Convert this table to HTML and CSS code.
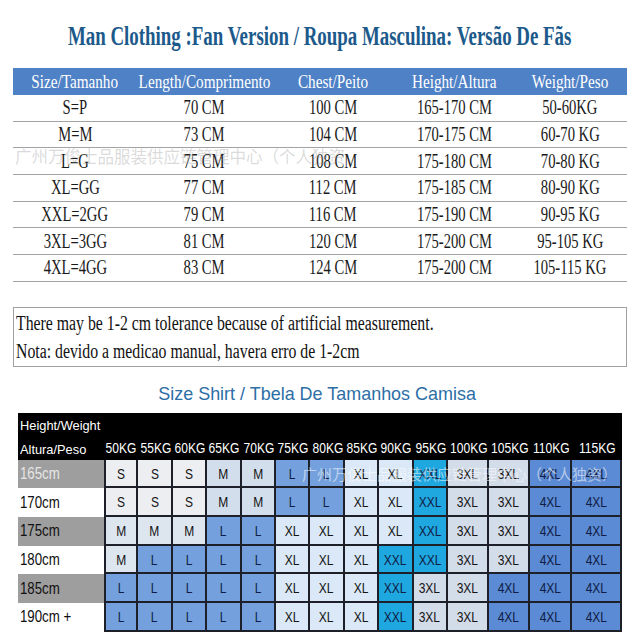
FILE: index.html
```html
<!DOCTYPE html>
<html lang="en">
<head>
<meta charset="utf-8">
<title>Size chart</title>
<link rel="stylesheet" href="styles.css">
</head>
<body>
<div class="page">
  <h1 class="title"><span class="tt">Man Clothing :Fan Version / Roupa Masculina: Versão De Fãs</span></h1>

  <div class="spec">
    <div class="srow shead">
      <div class="sc"><span class="hn">Size/Tamanho</span></div>
      <div class="sc"><span class="hn">Length/Comprimento</span></div>
      <div class="sc"><span class="hn">Chest/Peito</span></div>
      <div class="sc"><span class="hn">Height/Altura</span></div>
      <div class="sc"><span class="hn">Weight/Peso</span></div>
    </div>
    <div class="srow">
      <div class="sc"><span class="cn">S=P</span></div>
      <div class="sc"><span class="cn">70 CM</span></div>
      <div class="sc"><span class="cn">100 CM</span></div>
      <div class="sc"><span class="cn">165-170 CM</span></div>
      <div class="sc"><span class="cn">50-60KG</span></div>
    </div>
    <div class="srow">
      <div class="sc"><span class="cn">M=M</span></div>
      <div class="sc"><span class="cn">73 CM</span></div>
      <div class="sc"><span class="cn">104 CM</span></div>
      <div class="sc"><span class="cn">170-175 CM</span></div>
      <div class="sc"><span class="cn">60-70 KG</span></div>
    </div>
    <div class="srow">
      <div class="sc"><span class="cn">L=G</span></div>
      <div class="sc"><span class="cn">75 CM</span></div>
      <div class="sc"><span class="cn">108 CM</span></div>
      <div class="sc"><span class="cn">175-180 CM</span></div>
      <div class="sc"><span class="cn">70-80 KG</span></div>
    </div>
    <div class="srow">
      <div class="sc"><span class="cn">XL=GG</span></div>
      <div class="sc"><span class="cn">77 CM</span></div>
      <div class="sc"><span class="cn">112 CM</span></div>
      <div class="sc"><span class="cn">175-185 CM</span></div>
      <div class="sc"><span class="cn">80-90 KG</span></div>
    </div>
    <div class="srow">
      <div class="sc"><span class="cn">XXL=2GG</span></div>
      <div class="sc"><span class="cn">79 CM</span></div>
      <div class="sc"><span class="cn">116 CM</span></div>
      <div class="sc"><span class="cn">175-190 CM</span></div>
      <div class="sc"><span class="cn">90-95 KG</span></div>
    </div>
    <div class="srow">
      <div class="sc"><span class="cn">3XL=3GG</span></div>
      <div class="sc"><span class="cn">81 CM</span></div>
      <div class="sc"><span class="cn">120 CM</span></div>
      <div class="sc"><span class="cn">175-200 CM</span></div>
      <div class="sc"><span class="cn">95-105 KG</span></div>
    </div>
    <div class="srow">
      <div class="sc"><span class="cn">4XL=4GG</span></div>
      <div class="sc"><span class="cn">83 CM</span></div>
      <div class="sc"><span class="cn">124 CM</span></div>
      <div class="sc"><span class="cn">175-200 CM</span></div>
      <div class="sc"><span class="cn">105-115 KG</span></div>
    </div>
    <div class="wm wm-top">广州万俊士品服装供应链管理中心（个人独资</div>
  </div>

  <div class="note">
    <p><span class="nt">There may be 1-2 cm tolerance because of artificial measurement.</span></p>
    <p><span class="nt">Nota: devido a medicao manual, havera erro de 1-2cm</span></p>
  </div>

  <h2 class="sub"><span class="st">Size Shirt / Tbela De Tamanhos Camisa</span></h2>

  <div class="chart">
    <div class="ch ch-label"><span class="hl">Height/Weight</span><span class="hl">Altura/Peso</span></div>
    <div class="ch"><span class="kg">50KG</span></div>
    <div class="ch"><span class="kg">55KG</span></div>
    <div class="ch"><span class="kg">60KG</span></div>
    <div class="ch"><span class="kg">65KG</span></div>
    <div class="ch"><span class="kg">70KG</span></div>
    <div class="ch"><span class="kg">75KG</span></div>
    <div class="ch"><span class="kg">80KG</span></div>
    <div class="ch"><span class="kg">85KG</span></div>
    <div class="ch"><span class="kg">90KG</span></div>
    <div class="ch"><span class="kg">95KG</span></div>
    <div class="ch"><span class="kg">100KG</span></div>
    <div class="ch"><span class="kg">105KG</span></div>
    <div class="ch"><span class="kg">110KG</span></div>
    <div class="ch"><span class="kg">115KG</span></div>

    <div class="lb lb-gray lb-light"><span class="lt">165cm</span></div>
    <div class="c first s"><span>S</span></div><div class="c s"><span>S</span></div><div class="c s"><span>S</span></div><div class="c m"><span>M</span></div><div class="c m"><span>M</span></div><div class="c l"><span>L</span></div><div class="c l"><span>L</span></div><div class="c xl"><span>XL</span></div><div class="c xl"><span>XL</span></div><div class="c xxl"><span>XXL</span></div><div class="c x3"><span>3XL</span></div><div class="c x3"><span>3XL</span></div><div class="c x4"><span>4XL</span></div><div class="c x4"><span>4XL</span></div>

    <div class="lb"><span class="lt">170cm</span></div>
    <div class="c first s"><span>S</span></div><div class="c s"><span>S</span></div><div class="c s"><span>S</span></div><div class="c m"><span>M</span></div><div class="c m"><span>M</span></div><div class="c l"><span>L</span></div><div class="c l"><span>L</span></div><div class="c xl"><span>XL</span></div><div class="c xl"><span>XL</span></div><div class="c xxl"><span>XXL</span></div><div class="c x3"><span>3XL</span></div><div class="c x3"><span>3XL</span></div><div class="c x4"><span>4XL</span></div><div class="c x4"><span>4XL</span></div>

    <div class="lb lb-gray"><span class="lt">175cm</span></div>
    <div class="c first m2"><span>M</span></div><div class="c m2"><span>M</span></div><div class="c m2"><span>M</span></div><div class="c l"><span>L</span></div><div class="c l"><span>L</span></div><div class="c xl"><span>XL</span></div><div class="c xl"><span>XL</span></div><div class="c xl"><span>XL</span></div><div class="c xl"><span>XL</span></div><div class="c xxl"><span>XXL</span></div><div class="c x3"><span>3XL</span></div><div class="c x3"><span>3XL</span></div><div class="c x4"><span>4XL</span></div><div class="c x4"><span>4XL</span></div>

    <div class="lb"><span class="lt">180cm</span></div>
    <div class="c first m2"><span>M</span></div><div class="c l"><span>L</span></div><div class="c l"><span>L</span></div><div class="c l"><span>L</span></div><div class="c l"><span>L</span></div><div class="c xl"><span>XL</span></div><div class="c xl"><span>XL</span></div><div class="c xl"><span>XL</span></div><div class="c xxl"><span>XXL</span></div><div class="c xxl"><span>XXL</span></div><div class="c x3"><span>3XL</span></div><div class="c x3"><span>3XL</span></div><div class="c x4"><span>4XL</span></div><div class="c x4"><span>4XL</span></div>

    <div class="lb lb-gray"><span class="lt">185cm</span></div>
    <div class="c first l"><span>L</span></div><div class="c l"><span>L</span></div><div class="c l"><span>L</span></div><div class="c l"><span>L</span></div><div class="c l"><span>L</span></div><div class="c xl"><span>XL</span></div><div class="c xl"><span>XL</span></div><div class="c xl"><span>XL</span></div><div class="c xxl"><span>XXL</span></div><div class="c x3"><span>3XL</span></div><div class="c x3"><span>3XL</span></div><div class="c x4"><span>4XL</span></div><div class="c x4"><span>4XL</span></div><div class="c x4"><span>4XL</span></div>

    <div class="lb"><span class="lt">190cm +</span></div>
    <div class="c first l"><span>L</span></div><div class="c l"><span>L</span></div><div class="c l"><span>L</span></div><div class="c l"><span>L</span></div><div class="c l"><span>L</span></div><div class="c xl"><span>XL</span></div><div class="c xl"><span>XL</span></div><div class="c xl"><span>XL</span></div><div class="c xxl"><span>XXL</span></div><div class="c x3"><span>3XL</span></div><div class="c x3"><span>3XL</span></div><div class="c x4"><span>4XL</span></div><div class="c x4"><span>4XL</span></div><div class="c x4"><span>4XL</span></div>

    <div class="wm wm-bottom">广州万俊士品服装供应链管理中心（个人独资）</div>
  </div>
</div>
</body>
</html>
```

FILE: styles.css
```css
* { box-sizing: border-box; }

html, body {
  margin: 0;
  padding: 0;
  background: #ffffff;
}

.page {
  width: 640px;
  height: 640px;
  overflow: hidden;
  font-family: "Liberation Serif", "Times New Roman", serif;
  color: #1a1a1a;
}

/* ---------- main title ---------- */
.title {
  margin: 0;
  height: 68px;
  display: flex;
  align-items: center;
  justify-content: center;
  padding-top: 4px;
  font-size: 27px;
  font-weight: bold;
  color: #1c5a8b;
  white-space: nowrap;
}
.tt {
  display: inline-block;
  flex: none;
  transform: scaleX(0.7);
}

/* ---------- spec table ---------- */
.spec {
  position: relative;
  width: 614px;
  margin-left: 13px;
}
.srow {
  display: grid;
  grid-template-columns: 124px 134px 124px 118px 114px;
  height: 26.7px;
  border-bottom: 1px solid #a3a3a3;
}
.shead {
  height: 27px;
  background: #4f81c6;
  color: #ffffff;
  border-bottom: none;
}
.sc {
  display: flex;
  align-items: center;
  justify-content: center;
  white-space: nowrap;
  font-size: 20px;
}
.shead .sc { font-size: 19.5px; }
.hn {
  display: inline-block;
  transform: scaleX(0.78);
}
.cn {
  display: inline-block;
  transform: scaleX(0.73);
}

.wm {
  position: absolute;
  white-space: nowrap;
  font-family: "Noto Sans CJK SC", sans-serif;
  pointer-events: none;
}
.wm-top {
  left: 2px;
  top: 76px;
  font-size: 16.5px;
  color: rgba(150, 150, 150, 0.35);
}

/* ---------- note box ---------- */
.note {
  width: 614px;
  margin: 25px 0 0 13px;
  border: 1px solid #a0a0a0;
  padding: 1px 2px;
}
.note p {
  margin: 0;
  height: 28px;
  line-height: 28px;
  font-size: 20px;
  white-space: nowrap;
  color: #111;
}
.nt {
  display: inline-block;
  transform: scaleX(0.79);
  transform-origin: left center;
}

/* ---------- second title ---------- */
.sub {
  margin: 0;
  height: 46px;
  padding-top: 8px;
  line-height: 38px;
  text-align: center;
  font-family: "Liberation Sans", Arial, sans-serif;
  font-weight: normal;
  font-size: 19px;
  color: #2c6ea6;
  white-space: nowrap;
}
.st {
  display: inline-block;
  transform: scaleX(0.945);
  margin-left: -6px;
}

/* ---------- shirt chart ---------- */
.chart {
  position: relative;
  width: 604px;
  margin-left: 18px;
  display: grid;
  grid-template-columns: 86px repeat(10, 34.4px) 41px 41px 42px 50px;
  grid-template-rows: 47px repeat(6, 28.67px);
  font-family: "Liberation Sans", Arial, sans-serif;
}
.ch {
  background: #000000;
  color: #ffffff;
  display: flex;
  align-items: flex-end;
  justify-content: center;
  white-space: nowrap;
  font-size: 14px;
  line-height: 24px;
}
.ch-label {
  flex-direction: column;
  align-items: flex-start;
  justify-content: flex-start;
  padding: 1px 0 0 2px;
  font-size: 13.5px;
}
.hl {
  display: block;
  height: 24px;
  transform: scaleX(0.95);
  transform-origin: left center;
}
.kg {
  display: inline-block;
  transform: scaleX(0.86);
}

.lb {
  display: flex;
  align-items: center;
  padding-left: 2px;
  font-size: 17px;
  color: #111;
  background: #ffffff;
  white-space: nowrap;
}
.lb-gray { background: #9e9e9e; }
.lb-light { color: #e6e6e6; }
.lt {
  display: inline-block;
  transform: scaleX(0.78);
  transform-origin: left center;
}

.c {
  display: flex;
  align-items: center;
  justify-content: center;
  border-right: 2px solid #1d1f29;
  border-bottom: 2px solid #1d1f29;
  font-size: 15px;
  color: #141414;
}
.c.first { border-left: 2px solid #1d1f29; }
.c span {
  display: inline-block;
  transform: scaleX(0.8);
}
.s   { background: #eceef1; }
.m   { background: #d3deec; }
.m2  { background: #dde5ef; }
.l   { background: #74a1dd; color: #0f1c45; }
.xl  { background: #dae8f7; }
.xxl { background: #1fa7e0; color: #0f1c45; }
.x3  { background: #d3dce9; }
.x4  { background: #5b8bd4; color: #0f1c45; }

.wm-bottom {
  left: 284px;
  top: 50px;
  font-size: 15px;
  color: rgba(255, 255, 255, 0.55);
}
```
